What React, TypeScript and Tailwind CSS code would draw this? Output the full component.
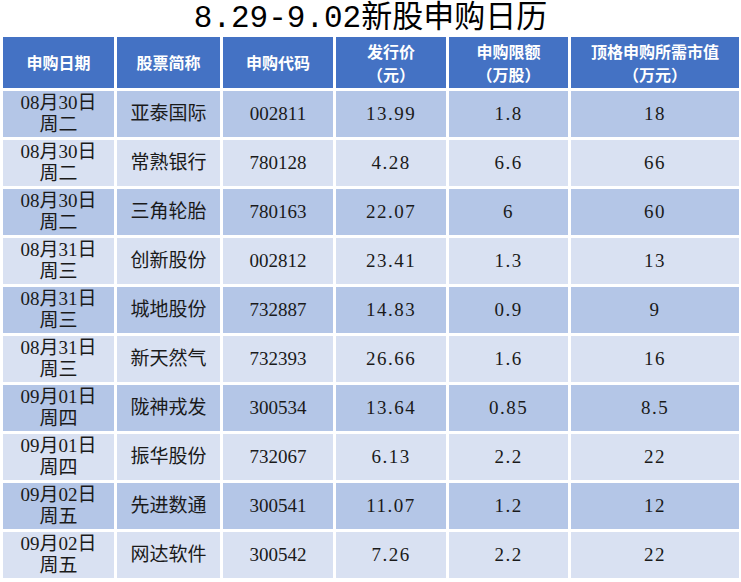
const rows = [
  ["08月30日", "周二", "亚泰国际", "002811", "13.99", "1.8", "18"],
  ["08月30日", "周二", "常熟银行", "780128", "4.28", "6.6", "66"],
  ["08月30日", "周二", "三角轮胎", "780163", "22.07", "6", "60"],
  ["08月31日", "周三", "创新股份", "002812", "23.41", "1.3", "13"],
  ["08月31日", "周三", "城地股份", "732887", "14.83", "0.9", "9"],
  ["08月31日", "周三", "新天然气", "732393", "26.66", "1.6", "16"],
  ["09月01日", "周四", "陇神戎发", "300534", "13.64", "0.85", "8.5"],
  ["09月01日", "周四", "振华股份", "732067", "6.13", "2.2", "22"],
  ["09月02日", "周五", "先进数通", "300541", "11.07", "1.2", "12"],
  ["09月02日", "周五", "网达软件", "300542", "7.26", "2.2", "22"],
];

const headers: [string, string?][] = [
  ["申购日期"],
  ["股票简称"],
  ["申购代码"],
  ["发行价", "（元）"],
  ["申购限额", "（万股）"],
  ["顶格申购所需市值", "（万元）"],
];

const serif = "font-['Liberation_Serif','Noto_Sans_CJK_SC',serif]";

export default function App() {
  return (
    <div className="h-[582px] w-[741px] overflow-hidden bg-white">
      <h1 className="h-[37px] text-center font-['Liberation_Mono','Noto_Sans_CJK_SC',monospace] text-[31px] leading-[37px] text-black">
        8.29-9.02新股申购日历
      </h1>
      <div className="ml-[3px] grid grid-cols-[111px_103px_110px_110px_119px_168px] grid-rows-[51px_repeat(10,46px)] gap-[3px]">
        {headers.map(([a, b]) => (
          <div
            key={a}
            className="flex flex-col items-center justify-center bg-[#4472c4] font-['Noto_Sans_CJK_SC',sans-serif] text-[16px] font-bold leading-[23px] text-white"
          >
            <span>{a}</span>
            {b && <span>{b}</span>}
          </div>
        ))}
        {rows.map((r, i) => {
          const bg = i % 2 === 0 ? "bg-[#b4c6e7]" : "bg-[#d9e1f2]";
          const cell = `flex items-center justify-center ${bg} ${serif} text-[19px] text-[#1a1a1a]`;
          return [
            <div key={i + "d"} className={`${cell} flex-col leading-[22px]`}>
              <span>{r[0]}</span>
              <span>{r[1]}</span>
            </div>,
            ...r.slice(2).map((v, j) => (
              <div key={i + "c" + j} className={`${cell} ${j > 1 ? "tracking-[1.5px]" : ""}`}>
                {v}
              </div>
            )),
          ];
        })}
      </div>
    </div>
  );
}
